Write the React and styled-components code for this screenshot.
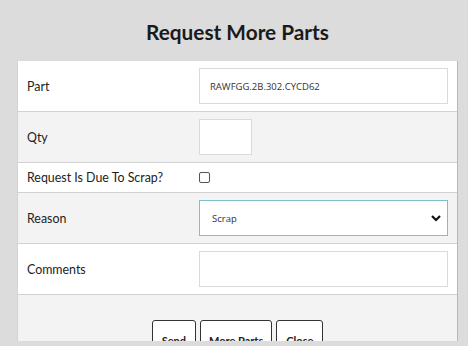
import React from "react";
import styled, { createGlobalStyle } from "styled-components";

const GlobalStyle = createGlobalStyle`
  html, body {
    margin: 0;
    padding: 0;
    background: #dcdcdc;
    font-family: Lato, "Open Sans", sans-serif;
    color: #222;
  }
`;

const Page = styled.div`
  height: 346px;
  overflow: hidden;
  padding: 0 10px 0 17px;
`;

const Title = styled.h1`
  margin: 0;
  height: 61px;
  padding-top: 2px;
  box-sizing: border-box;
  display: flex;
  align-items: center;
  justify-content: center;
  font-size: 20.8px;
  font-weight: 700;
  color: #1a1a1a;
  width: 441px;
`;

const Panel = styled.div`
  width: 441px;
  box-sizing: border-box;
  height: 280px;
  overflow: hidden;
  background: #fff;
  border-left: 1px solid #d4d4d4;
  border-right: 1px solid #b8b8b8;
`;

const Row = styled.div`
  display: grid;
  grid-template-columns: 172px 1fr;
  align-items: center;
  background: ${(p) => (p.$alt ? "#f3f3f3" : "#fff")};
  border-bottom: 1px solid #d2d2d2;
  min-height: ${(p) => p.$h || 50}px;
`;

const Label = styled.div`
  padding-left: 9px;
  font-size: 12.4px;
  color: #222;
`;

const Cell = styled.div`
  padding: ${(p) => (p.$tight ? "0 9px" : "7px 9px")};
  display: flex;
  align-items: center;
`;

const TextInput = styled.div`
  box-sizing: border-box;
  height: 36px;
  width: ${(p) => p.$w || "100%"};
  background: #fff;
  border: 1px solid #dadada;
  display: flex;
  align-items: center;
  padding-left: 10px;
  font-family: "Open Sans", sans-serif;
  font-size: 9.5px;
  color: #333;
`;

const Select = styled(TextInput)`
  border-color: #7fc0c8;
  justify-content: space-between;
  padding: 0 5px 0 12px;
`;

const Check = styled.span`
  display: inline-block;
  width: 9px;
  height: 9px;
  border: 1px solid #555;
  border-radius: 2px;
  background: #fff;
`;

const Footer = styled.div`
  background: #f3f3f3;
  display: flex;
  justify-content: center;
  gap: 4px;
  padding-top: 25px;
  height: 60px;
`;

const Button = styled.button`
  height: 30px;
  padding: 10px ${(p) => p.$px || 9}px 0;
  background: #fff;
  border: 1px solid #333;
  border-radius: 3px;
  font-family: Lato, sans-serif;
  font-weight: 700;
  font-size: 11px;
  color: #222;
`;

const Chevron = () => (
  <svg width="12" height="12" viewBox="0 0 12 12">
    <path d="M2 4 L6 8 L10 4" fill="none" stroke="#111" strokeWidth="2.2" />
  </svg>
);

export default function App() {
  return (
    <>
      <GlobalStyle />
      <Page>
        <Title>Request More Parts</Title>
        <Panel>
          <Row>
            <Label>Part</Label>
            <Cell>
              <TextInput>RAWFGG.2B.302.CYCD62</TextInput>
            </Cell>
          </Row>
          <Row $alt>
            <Label>Qty</Label>
            <Cell>
              <TextInput $w="53px" />
            </Cell>
          </Row>
          <Row $h={29}>
            <Label>Request Is Due To Scrap?</Label>
            <Cell $tight>
              <Check />
            </Cell>
          </Row>
          <Row $alt>
            <Label>Reason</Label>
            <Cell>
              <Select>
                Scrap
                <Chevron />
              </Select>
            </Cell>
          </Row>
          <Row>
            <Label>Comments</Label>
            <Cell>
              <TextInput />
            </Cell>
          </Row>
          <Footer>
            <Button>Send</Button>
            <Button $px={8}>More Parts</Button>
            <Button>Close</Button>
          </Footer>
        </Panel>
      </Page>
    </>
  );
}
